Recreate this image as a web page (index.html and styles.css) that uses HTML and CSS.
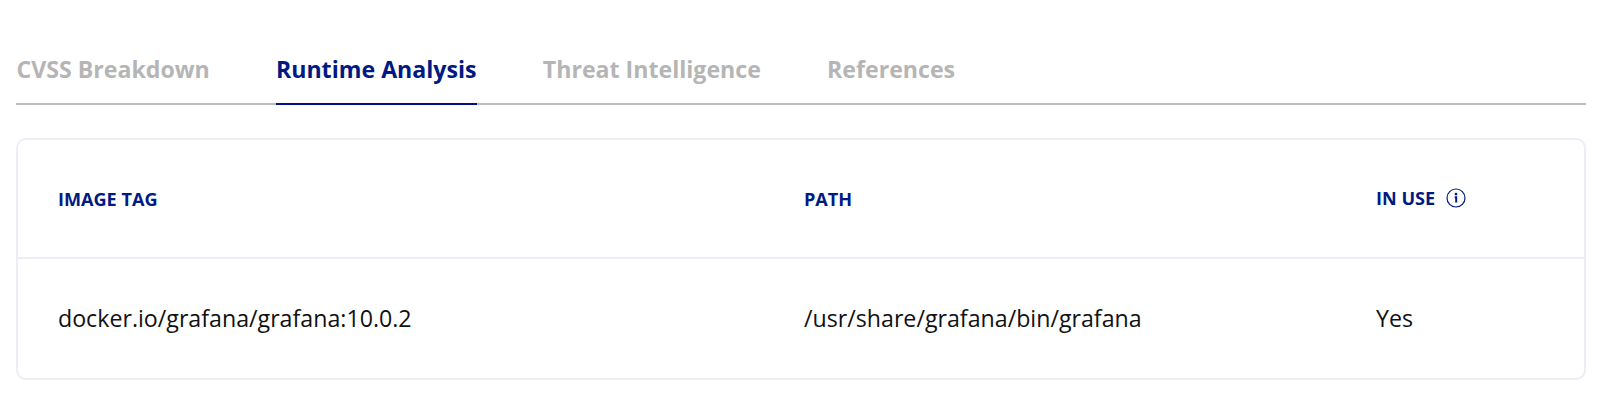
FILE: index.html
```html
<!DOCTYPE html>
<html lang="en">
<head>
    <meta charset="UTF-8">
    <meta name="viewport" content="width=device-width, initial-scale=1.0">
    <title>Runtime Analysis</title>
    <link rel="stylesheet" href="styles.css">
</head>
<body>
    <nav class="tabs">
        <a class="tab">CVSS Breakdown</a>
        <a class="tab active">Runtime Analysis</a>
        <a class="tab">Threat Intelligence</a>
        <a class="tab">References</a>
    </nav>

    <div class="card">
        <div class="row row-head">
            <div class="cell">IMAGE TAG</div>
            <div class="cell">PATH</div>
            <div class="cell in-use">
                <span>IN USE</span>
                <svg class="info-icon" viewBox="0 0 20 20">
                    <circle cx="10" cy="10" r="9" fill="none" stroke="currentColor" stroke-width="1.2"/>
                    <circle cx="10" cy="6.1" r="1.4" fill="currentColor"/>
                    <path d="M8.7 9.3h1.5v5.2" fill="none" stroke="currentColor" stroke-width="2"/>
                </svg>
            </div>
        </div>
        <div class="row row-body">
            <div class="cell">docker.io/grafana/grafana:10.0.2</div>
            <div class="cell">/usr/share/grafana/bin/grafana</div>
            <div class="cell">Yes</div>
        </div>
    </div>
</body>
</html>
```

FILE: styles.css
```css
* {
    margin: 0;
    padding: 0;
    box-sizing: border-box;
}

body {
    background: #fff;
    color: #111;
    font-family: "Open Sans", "Noto Sans", sans-serif;
    padding: 53px 14px 0 16.4px;
}

/* Tabs */
.tabs {
    display: flex;
    gap: 66.2px;
    height: 52px;
    box-shadow: inset 0 -2px #bdbdbd;
}

.tab {
    font-size: 23.15px;
    font-weight: 700;
    line-height: 32px;
    color: #b5b5b5;
    white-space: nowrap;
}

.tab.active {
    color: #001a83;
    border-bottom: 2px solid #00118c;
}

/* Table card */
.card {
    margin-top: 33px;
    border: 2px solid #ededf5;
    border-radius: 10px;
}

.row {
    display: grid;
    grid-template-columns: 746px 572px 1fr;
    align-items: center;
    height: 119px;
    padding-left: 39.6px;
    font-size: 23.2px;
}

.row-head {
    border-bottom: 2px solid #ededf5;
    color: #001a83;
    font-size: 18.1px;
    font-weight: 700;
}

.row-body {
    padding-bottom: 2px;
}

.cell {
    white-space: nowrap;
}

.in-use {
    display: flex;
    align-items: center;
    gap: 11px;
    padding-bottom: 2px;
}

.info-icon {
    width: 20px;
    height: 20px;
}
```
